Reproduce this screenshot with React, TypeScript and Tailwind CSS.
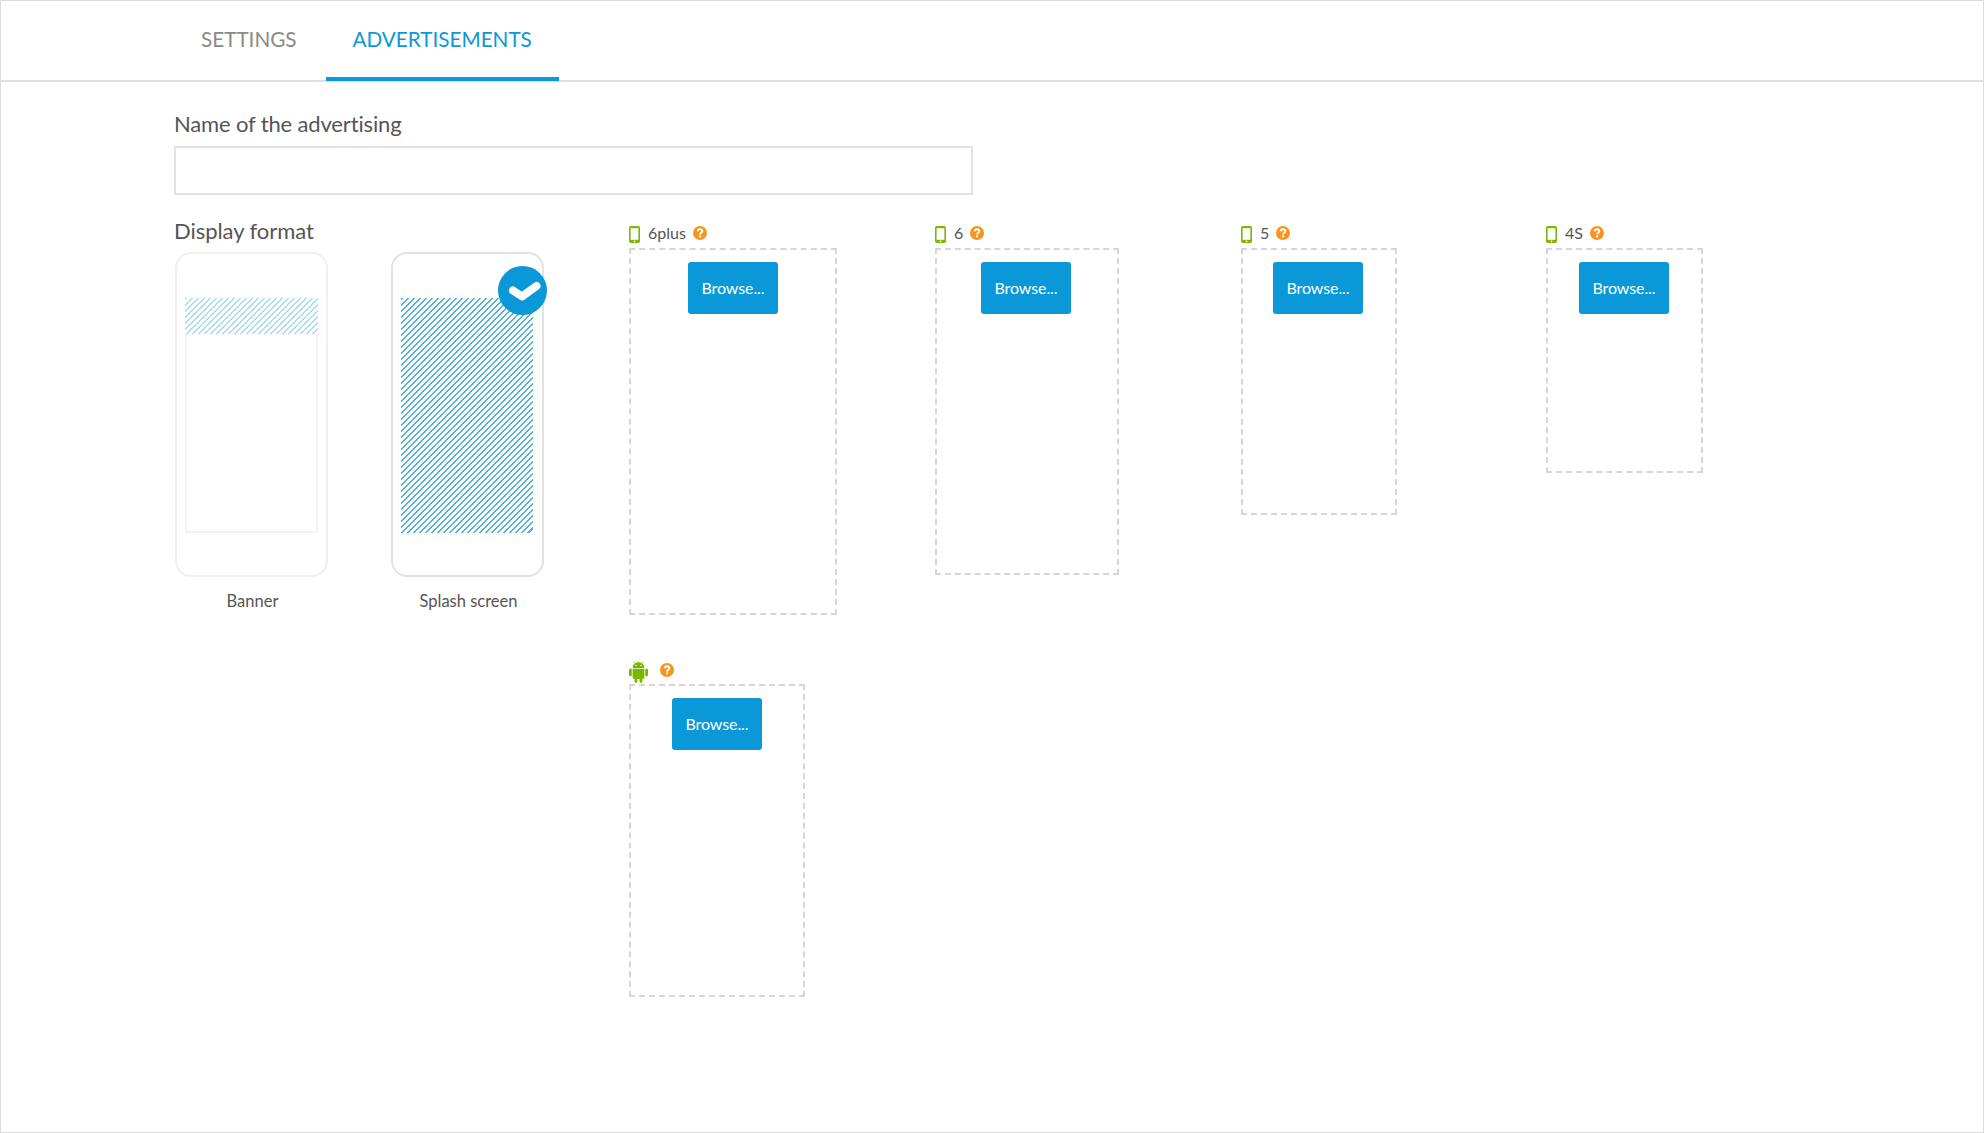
type Slot = {
  label?: string;
  width: string;
  height: string;
  buttonMargin: string;
  android?: boolean;
};

const slots: Slot[] = [
  { label: "6plus", width: "w-[208px]", height: "h-[367px]", buttonMargin: "ml-[57px]" },
  { label: "6", width: "w-[184px]", height: "h-[327px]", buttonMargin: "ml-[44px]" },
  { label: "5", width: "w-[156px]", height: "h-[267px]", buttonMargin: "ml-[30px]" },
  { label: "4S", width: "w-[157px]", height: "h-[225px]", buttonMargin: "ml-[31px]" },
  { width: "w-[176px]", height: "h-[313px]", buttonMargin: "ml-[41px]", android: true },
];

function PhoneIcon() {
  return (
    <svg width="11" height="17" viewBox="0 0 11 17" className="mt-[-3px] shrink-0">
      <rect x="0" y="0" width="11" height="17" rx="2" fill="#7ab800" />
      <rect x="1.6" y="2.2" width="7.8" height="11.6" fill="#ffffff" />
      <circle cx="5.5" cy="15.3" r="0.9" fill="#ffffff" />
    </svg>
  );
}

function AndroidIcon() {
  return (
    <svg width="19" height="22" viewBox="0 0 19 22" className="shrink-0" fill="#7ab800">
      <path d="M3.6 7.2C3.6 3.6 6.2 1.2 9.5 1.2s5.9 2.4 5.9 6Z" />
      <path d="M6 2.4 4.9 0.4M13 2.4 14.1 0.4" stroke="#7ab800" strokeWidth="0.7" />
      <circle cx="7" cy="4.4" r="0.7" fill="#ffffff" />
      <circle cx="12" cy="4.4" r="0.7" fill="#ffffff" />
      <path d="M3.6 8H15.4V16.6A1.4 1.4 0 0 1 14 18H5A1.4 1.4 0 0 1 3.6 16.6Z" />
      <rect x="0" y="7.6" width="2.8" height="7.8" rx="1.4" />
      <rect x="16.2" y="7.6" width="2.8" height="7.8" rx="1.4" />
      <rect x="5.6" y="16" width="2.8" height="6" rx="1.4" />
      <rect x="10.6" y="16" width="2.8" height="6" rx="1.4" />
    </svg>
  );
}

function QuestionIcon({ className }: { className: string }) {
  return (
    <svg width="14" height="14" viewBox="0 0 14 14" className={`shrink-0 ${className}`}>
      <circle cx="7" cy="7" r="7" fill="#f7941d" />
      <path
        d="M4.7 5.4C4.8 4 5.8 3.2 7 3.2s2.3.8 2.3 2c0 1.6-2.2 1.7-2.2 3.2"
        fill="none"
        stroke="#ffffff"
        strokeWidth="1.9"
      />
      <rect x="6.1" y="9.4" width="2" height="1.9" fill="#ffffff" />
    </svg>
  );
}

function UploadSlot({ slot }: { slot: Slot }) {
  return (
    <div>
      <div className="flex h-[24px] items-center text-[16px] text-[#555555]">
        {slot.android ? (
          <>
            <AndroidIcon />
            <QuestionIcon className="ml-[12px] mt-[-4px]" />
          </>
        ) : (
          <>
            <PhoneIcon />
            <span className="ml-[8px] mt-[-6px]">{slot.label}</span>
            <QuestionIcon className="ml-[7px] mt-[-6px]" />
          </>
        )}
      </div>
      <div className={`${slot.width} ${slot.height} border-2 border-dashed border-[#d6d6d6] pt-[12px]`}>
        <button
          className={`${slot.buttonMargin} h-[52px] w-[90px] rounded-[3px] bg-[#0b98d8] text-[16px] tracking-[-0.1px] text-white`}
        >
          Browse...
        </button>
      </div>
    </div>
  );
}

function PhoneFormat({
  label,
  selected,
  children,
}: {
  label: string;
  selected?: boolean;
  children: React.ReactNode;
}) {
  return (
    <div className="w-[153px]">
      <div
        className={`relative h-[325px] rounded-[16px] border-2 px-[8px] pt-[44px] ${
          selected ? "border-[#e2e2e2]" : "border-[#f0f0f0]"
        }`}
      >
        {children}
        {selected && (
          <div className="absolute left-[105px] top-[12px] h-[49px] w-[49px] rounded-full bg-[#0b98d8]">
            <svg width="49" height="49" viewBox="0 0 49 49">
              <polyline
                points="15,24.5 24,30.5 38.5,20"
                fill="none"
                stroke="#ffffff"
                strokeWidth="8"
                strokeLinecap="round"
                strokeLinejoin="round"
              />
            </svg>
          </div>
        )}
      </div>
      <div className="mt-[12px] pl-[2px] text-center text-[16.5px] leading-[24px] text-[#555555]">{label}</div>
    </div>
  );
}

export default function App() {
  return (
    <div className="h-[1133px] w-[1984px] border border-[#dddddd] bg-white font-['Lato',sans-serif]">
      <nav className="flex h-[81px] items-start gap-[2px] border-b-2 border-[#dfdfdf] pl-[173px]">
        <a className="flex h-[80px] items-center px-[27px] pb-[2px] text-[20.7px] text-[#8a8a8a]">SETTINGS</a>
        <a className="flex h-[80px] items-center border-b-[4px] border-[#0b98d8] px-[27px] pt-[2px] text-[20.7px] text-[#0b98d8]">
          ADVERTISEMENTS
        </a>
      </nav>

      <main className="pl-[173px]">
        <label className="mt-[26px] block text-[22px] leading-[32px] tracking-[-0.15px] text-[#555555]">
          Name of the advertising
        </label>
        <input className="mt-[6px] block h-[49px] w-[799px] border-2 border-[#e2e2e2]" />

        <div className="mt-[21px] flex">
          <div className="w-[455px] shrink-0">
            <h2 className="mt-[-1px] text-[22px] leading-[32px] tracking-[-0.05px] text-[#555555]">Display format</h2>
            <div className="ml-[1px] mt-[5px] flex gap-[63px]">
              <PhoneFormat label="Banner">
                <div className="h-[235px] border-2 border-t-0 border-[#f3f3f3]">
                  <div className="mx-[-2px] h-[36px] bg-[repeating-linear-gradient(135deg,#a9dcf1_0px,#a9dcf1_2.1px,#ffffff_2.1px,#ffffff_4.243px)]" />
                </div>
              </PhoneFormat>
              <PhoneFormat label="Splash screen" selected>
                <div className="h-[235px] w-[132px] bg-[repeating-linear-gradient(135deg,#4db3de_0px,#4db3de_2.1px,#ffffff_2.1px,#ffffff_4.243px)]" />
              </PhoneFormat>
            </div>
          </div>

          <div className="mt-[8px] grid grid-cols-[306px_306px_305px_306px] items-start gap-y-[45px]">
            {slots.map((slot, i) => (
              <UploadSlot key={i} slot={slot} />
            ))}
          </div>
        </div>
      </main>
    </div>
  );
}
